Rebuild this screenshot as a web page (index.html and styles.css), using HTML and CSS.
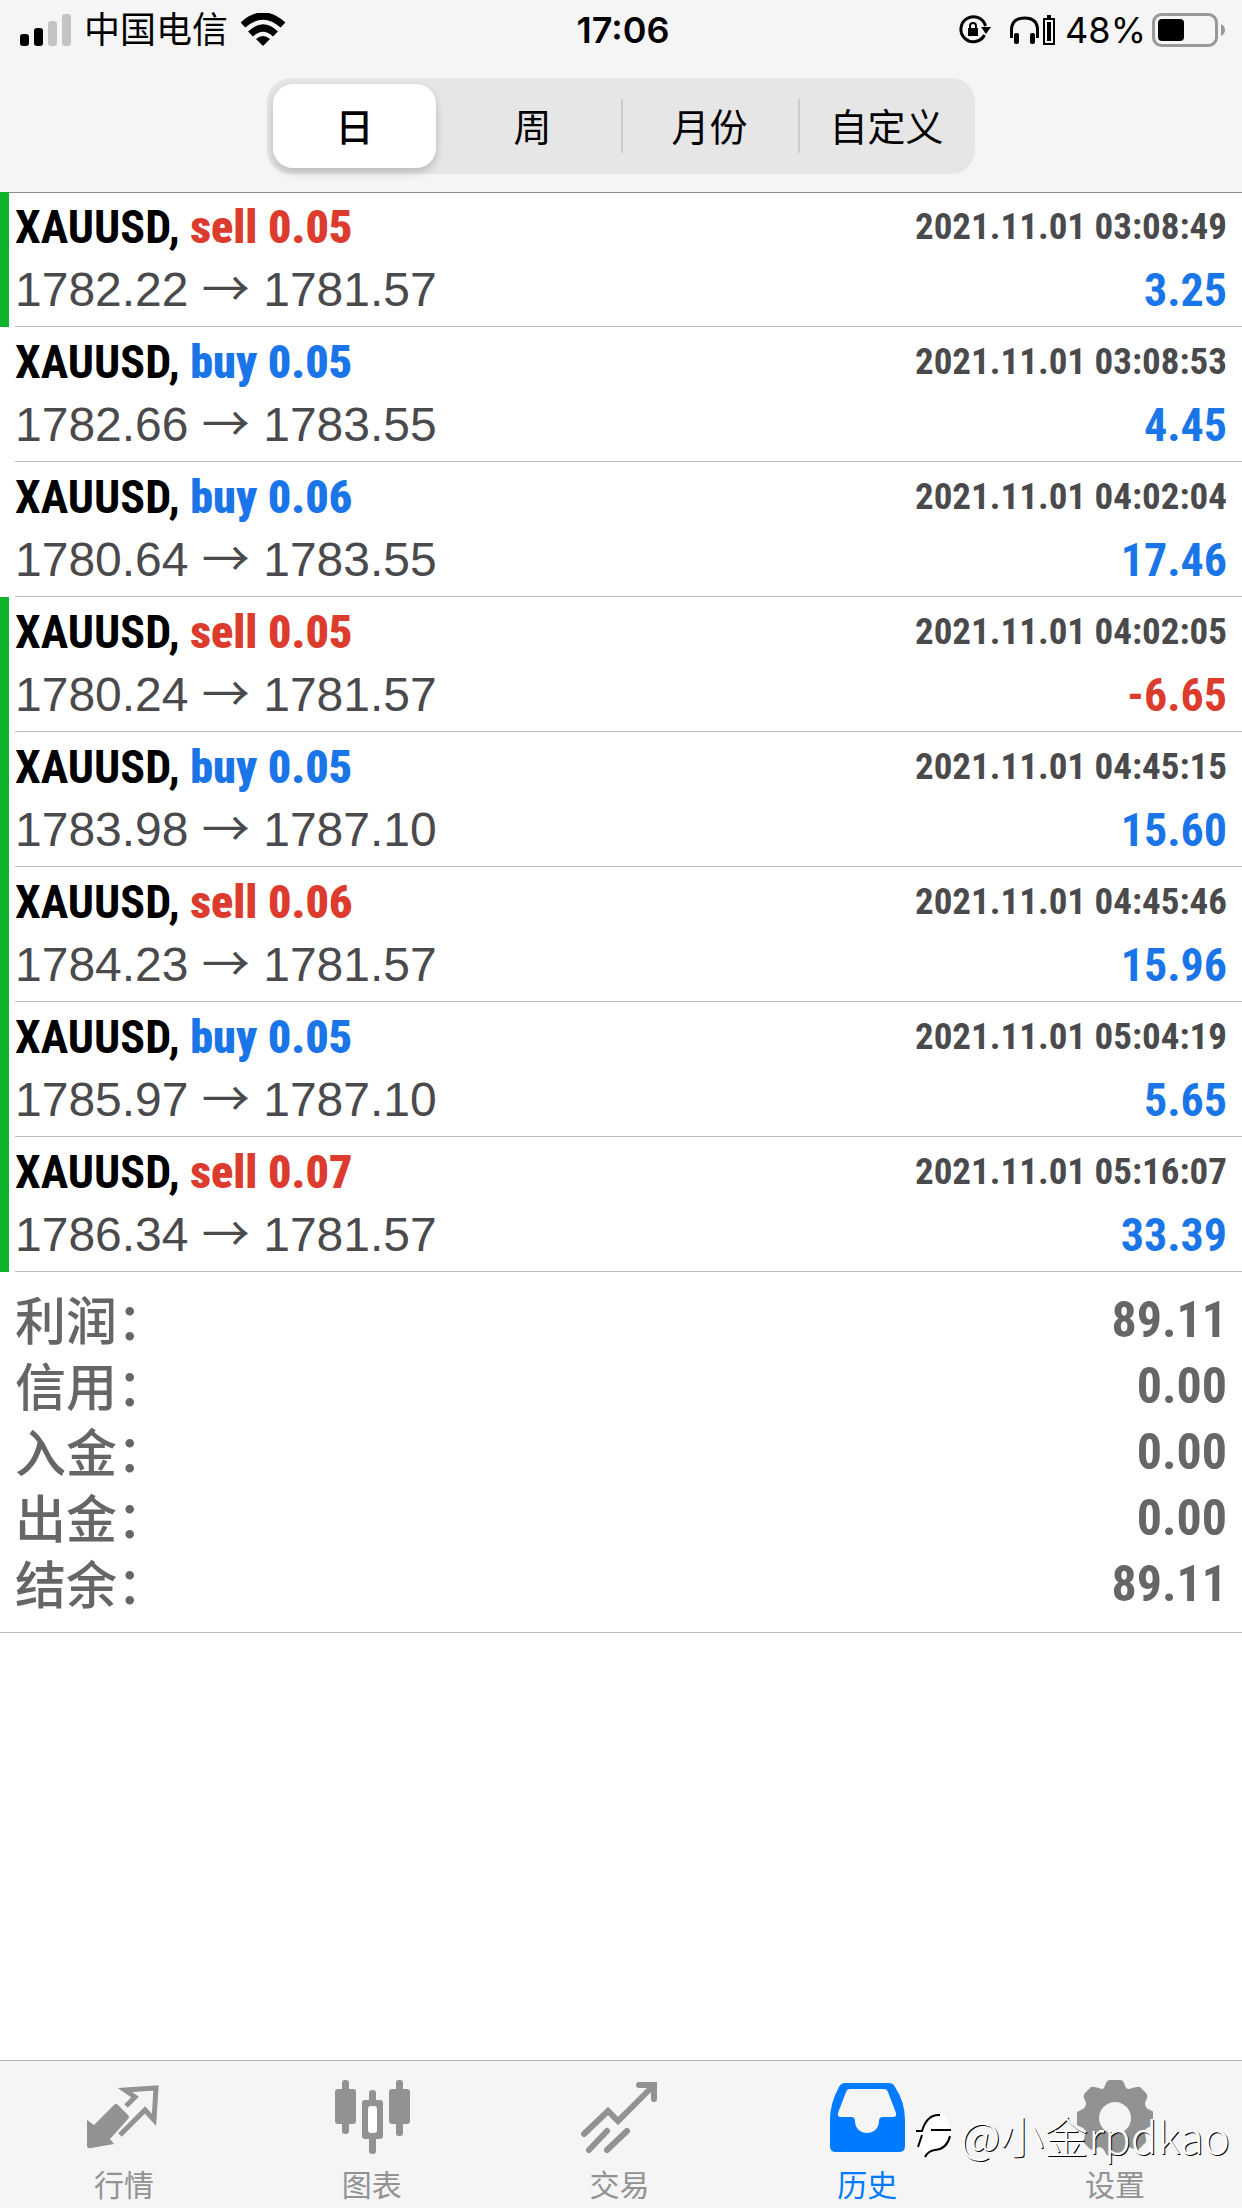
FILE: index.html
```html
<!DOCTYPE html>
<html lang="zh-CN">
<head>
<meta charset="utf-8">
<meta name="viewport" content="width=device-width, initial-scale=1">
<title>历史</title>
<link rel="stylesheet" href="styles.css">
</head>
<body>
<div class="app">
  <header class="header">
    <div class="status">
      <div class="status-left">
        <svg class="signal" viewBox="0 0 52 32" aria-hidden="true"><rect x="0" y="20" width="9" height="12" rx="3"/><rect x="14" y="14" width="9" height="18" rx="3"/><rect class="dim" x="28" y="7" width="9" height="25" rx="3"/><rect class="dim" x="42" y="0" width="9" height="32" rx="3"/></svg>
        <span>中国电信</span>
        <svg class="wifi" viewBox="0 0 46 34" aria-hidden="true"><path d="M3 12Q23 -6 43 12" stroke-width="7"/><path d="M10.500 21Q23 9 35.500 21" stroke-width="7"/><path class="solid" d="M16 26Q23 20 30 26L23 33Z"/></svg>
      </div>
      <time class="clock">17:06</time>
      <div class="status-right">
        <svg class="lock" viewBox="0 0 32 30" aria-hidden="true"><path d="M25.500 20A12.500 12.500 0 1 1 26.500 11" /><path class="solid" d="M22 12h10l-5 7zM9 13h10v8H9z"/><path class="thin" d="M11 14v-3a3 3 0 0 1 6 0v3"/></svg>
        <svg class="phones" viewBox="0 0 46 32" aria-hidden="true"><path d="M2.500 24V16Q2.500 4 15.500 4T28.500 16V24"/><rect x="5" y="19" width="5" height="11" rx="2" class="solid"/><rect x="21" y="19" width="5" height="11" rx="2" class="solid"/><path class="thin" d="M35 5h10v25H35z"/><path class="solid" d="M38 8h4v19h-4zM38 1h4v3h-4z"/></svg>
        <span class="percent">48%</span>
        <svg class="battery" viewBox="0 0 74 34" aria-hidden="true"><rect class="shell" x="1.500" y="1.500" width="63" height="31" rx="8"/><rect x="6" y="6" width="26" height="22" rx="4"/><path class="dim" d="M69 11q4 2 4 6t-4 6z"/></svg>
      </div>
    </div>
    <div class="segments" role="group" aria-label="时间范围">
      <button class="segment selected" type="button">日</button>
      <button class="segment" type="button">周</button>
      <button class="segment divided" type="button">月份</button>
      <button class="segment divided" type="button">自定义</button>
    </div>
  </header>

  <main class="content">
    <ul class="deals">
      <li class="deal marked"><div class="line"><span class="symbol">XAUUSD, <b class="sell">sell 0.05</b></span><time>2021.11.01 03:08:49</time></div><div class="line"><span class="prices">1782.22 <span class="arrow">→</span> 1781.57</span><b class="profit">3.25</b></div></li>
      <li class="deal"><div class="line"><span class="symbol">XAUUSD, <b class="buy">buy 0.05</b></span><time>2021.11.01 03:08:53</time></div><div class="line"><span class="prices">1782.66 <span class="arrow">→</span> 1783.55</span><b class="profit">4.45</b></div></li>
      <li class="deal"><div class="line"><span class="symbol">XAUUSD, <b class="buy">buy 0.06</b></span><time>2021.11.01 04:02:04</time></div><div class="line"><span class="prices">1780.64 <span class="arrow">→</span> 1783.55</span><b class="profit">17.46</b></div></li>
      <li class="deal marked"><div class="line"><span class="symbol">XAUUSD, <b class="sell">sell 0.05</b></span><time>2021.11.01 04:02:05</time></div><div class="line"><span class="prices">1780.24 <span class="arrow">→</span> 1781.57</span><b class="profit loss">-6.65</b></div></li>
      <li class="deal marked"><div class="line"><span class="symbol">XAUUSD, <b class="buy">buy 0.05</b></span><time>2021.11.01 04:45:15</time></div><div class="line"><span class="prices">1783.98 <span class="arrow">→</span> 1787.10</span><b class="profit">15.60</b></div></li>
      <li class="deal marked"><div class="line"><span class="symbol">XAUUSD, <b class="sell">sell 0.06</b></span><time>2021.11.01 04:45:46</time></div><div class="line"><span class="prices">1784.23 <span class="arrow">→</span> 1781.57</span><b class="profit">15.96</b></div></li>
      <li class="deal marked"><div class="line"><span class="symbol">XAUUSD, <b class="buy">buy 0.05</b></span><time>2021.11.01 05:04:19</time></div><div class="line"><span class="prices">1785.97 <span class="arrow">→</span> 1787.10</span><b class="profit">5.65</b></div></li>
      <li class="deal marked"><div class="line"><span class="symbol">XAUUSD, <b class="sell">sell 0.07</b></span><time>2021.11.01 05:16:07</time></div><div class="line"><span class="prices">1786.34 <span class="arrow">→</span> 1781.57</span><b class="profit">33.39</b></div></li>
    </ul>
    <dl class="summary">
      <div class="total"><dt>利润：</dt><dd>89.11</dd></div>
      <div class="total"><dt>信用：</dt><dd>0.00</dd></div>
      <div class="total"><dt>入金：</dt><dd>0.00</dd></div>
      <div class="total"><dt>出金：</dt><dd>0.00</dd></div>
      <div class="total"><dt>结余：</dt><dd>89.11</dd></div>
    </dl>
  </main>

  <nav class="tabs">
    <a class="tab" href="#quotes"><svg viewBox="0 0 76 76" aria-hidden="true"><path d="M1 40l7 5 20-20q2-2 4 0l10 10q2 2 0 4L24 59l4 5-23 4q-4 1-4-3z"/><path class="outline" d="M40 26l9-9-10-7 31-2-2 32-9-10-25 25"/></svg><span>行情</span></a>
    <a class="tab" href="#charts"><svg viewBox="0 0 76 76" aria-hidden="true"><rect x="1" y="9" width="21" height="35" rx="3"/><rect x="8" y="0" width="7" height="54" rx="3"/><rect x="55" y="9" width="21" height="35" rx="3"/><rect x="62" y="0" width="7" height="56" rx="3"/><rect x="28" y="20" width="21" height="39" rx="3"/><rect x="35" y="10" width="7" height="64" rx="3"/><rect class="hole" x="34" y="26" width="9" height="27" rx="3"/></svg><span>图表</span></a>
    <a class="tab" href="#trade"><svg viewBox="0 0 76 76" aria-hidden="true"><path class="stroke" d="M3 54L27 31l10 10 34-34M58 5h15v14"/><path class="stroke" d="M8 70l18-19M26 70l20-19"/></svg><span>交易</span></a>
    <a class="tab current" href="#history" aria-current="page"><svg viewBox="0 0 76 76" aria-hidden="true"><path fill-rule="evenodd" d="M16 3h44q4 0 6 4 10 15 10 33v26q0 6-6 6H7q-6 0-6-6V40Q1 23 10 7q2-4 6-4zM21 9q-3 0-4 3L9 33q-1 4 3 4h10q4 0 4 4c0 16 24 16 24 0q0-4 4-4h10q4 0 3-4l-8-21q-1-3-4-3z"/></svg><span>历史</span></a>
    <a class="tab" href="#settings"><svg viewBox="0 0 76 76" aria-hidden="true"><path fill-rule="evenodd" d="M33 0h10q3 0 4 3l2 5q3 2 6 0l5-1q3-1 5 2l4 4q2 2 1 5l-2 5q0 4 3 6l4 2q3 1 3 4v7q0 3-3 4l-5 2q-3 2-2 6l1 5q1 3-2 5l-5 5q-2 2-5 0l-5-2q-3 0-4 3l-1 4q-1 2-4 2H33q-3 0-4-2l-2-4q-2-3-5-3l-5 2q-3 2-5-1l-4-4q-2-2-1-5l1-5q1-4-2-6l-4-2q-3-1-3-4v-7q0-3 3-4l4-2q3-2 3-6l-2-5q-1-3 1-5l4-4q2-3 5-2l5 1q3 2 5 0l2-5q1-3 4-3zM38 22a16 16 0 1 0 .1 0z"/></svg><span>设置</span></a>
    <div class="watermark"><svg viewBox="0 0 38 48" aria-hidden="true"><path class="leaf" d="M5 19Q12 1 27 3 37 11 35 28 30 38 10 46L5 35Z"/><path class="ink" d="M1 20H7Q12 3 25 4M16 19h20M7 24L3 36M35 25Q32 38 20 39 13 40 10 46"/></svg><span>@小金rpdkao</span></div>
  </nav>
</div>
</body>
</html>
```

FILE: styles.css
```css
* { box-sizing: border-box; }
body { margin: 0; background: #fff; color: #000; font-family: "Liberation Sans", "Noto Sans CJK SC", sans-serif; }
.app { display: flex; flex-direction: column; min-height: 100vh; }
svg { display: block; flex: none; }

.header { display: flex; flex-direction: column; align-items: center; background: #f5f5f5; border-bottom: 1px solid #8c8c8c; padding-bottom: 18px; }
.status { display: grid; grid-template-columns: 1fr auto 1fr; align-items: center; width: 100%; height: 60px; margin-bottom: 18px; padding: 0 16px 0 20px; font: 36px/60px "Inter", "Noto Sans CJK SC", sans-serif; }
.status-left, .status-right { display: flex; align-items: center; }
.status-left { gap: 12px; }
.status-right { justify-content: flex-end; gap: 10px; }
.status .dim { fill: #c4c4c4; }
.clock { font-size: 36px; font-weight: 600; }
.signal { width: 52px; height: 32px; }
.wifi { width: 46px; height: 34px; }
.lock { width: 32px; height: 30px; margin-right: 8px; }
.phones { width: 46px; height: 32px; }
.percent { margin-right: -4px; }
.battery { width: 74px; height: 34px; }
.wifi path, .lock path, .phones path { fill: none; stroke: #000; }
.lock path, .phones path { stroke-width: 3; }
.lock .thin, .phones .thin { stroke-width: 2; }
.wifi .solid, .lock .solid, .phones .solid { fill: #000; stroke: none; }
.battery .shell { fill: none; stroke: #999; stroke-width: 3; }
.status .battery .dim { fill: #999; }

.segments { display: grid; grid-template-columns: repeat(4, 1fr); width: 57%; height: 96px; background: #e6e6e7; border-radius: 24px; }
.segment { border: 0; padding: 0 0 3px; background: none; color: #000; font: 400 38px/81px "Noto Sans CJK SC", sans-serif; }
.segment.selected { margin: 6px 8px 6px 6px; background: #fff; border-radius: 20px; box-shadow: 0 4px 8px #0003; font-weight: 500; }
.segment.divided { background: linear-gradient(#cdcdcf, #cdcdcf) left center / 2px 54px no-repeat; }

.content { flex: 1; margin-top: -1px; }
.deals { list-style: none; margin: 0; padding: 0; }
.deal { display: flex; flex-direction: column; height: 135px; padding: 3px 15px 5px 15px; background: linear-gradient(#bebec0, #bebec0) 15px 100% / 100% 1px no-repeat; }
.deal.marked { border-left: 9px solid #0cb52b; padding-left: 6px; background-position-x: 6px; }
.line { display: flex; justify-content: space-between; align-items: center; height: 63px; white-space: pre; }
.symbol, .deal time, .profit, .total dd { font-family: "Roboto Condensed", "Liberation Sans Narrow", sans-serif; font-weight: 700; }
.symbol { font-size: 46px; }
.deal time { font-size: 37px; color: #4a4a4c; }
.prices { font-size: 48px; line-height: 63px; color: #4a4a4c; }
.arrow { font-family: "Noto Sans CJK SC", sans-serif; line-height: 1; }
.profit { font-size: 46px; color: #1a76e8; }
.buy { color: #1a76e8; }
.sell, .loss { color: #dc3c2e; }

.summary { margin: 0; padding: 15px; border-bottom: 1px solid #bebec0; }
.total { display: flex; justify-content: space-between; align-items: center; height: 66px; color: #666; }
.total dt { padding-bottom: 4px; font: 500 51px/62px "Noto Sans CJK SC", sans-serif; }
.total dd { margin: 0; font-size: 50px; }

.tabs { position: relative; display: grid; grid-template-columns: repeat(5, 1fr); height: 148px; padding-right: 3px; background: #f5f5f5; border-top: 1px solid #b2b2b2; }
.tab { display: flex; flex-direction: column; align-items: center; padding-top: 19px; color: #929292; text-decoration: none; font: 400 30px/34px "Noto Sans CJK SC", sans-serif; }
.tab svg { width: 76px; height: 76px; margin-bottom: 10px; fill: currentColor; }
.tab .outline { fill: none; stroke: currentColor; stroke-width: 5; }
.tab .stroke { fill: none; stroke: currentColor; stroke-width: 6; stroke-linecap: round; }
.tab .hole { fill: #fff; }
.tab.current { color: #007aff; }
.watermark { position: absolute; right: 12px; bottom: 48px; display: flex; align-items: center; gap: 7px; color: #fff; font: 300 44px/50px "Noto Sans CJK SC", sans-serif; text-shadow: 1px 1px 0 #000; }
.watermark svg { width: 38px; height: 48px; }
.watermark .leaf { fill: #fff; }
.watermark .ink { fill: none; stroke: #000; stroke-width: 2; }
```
